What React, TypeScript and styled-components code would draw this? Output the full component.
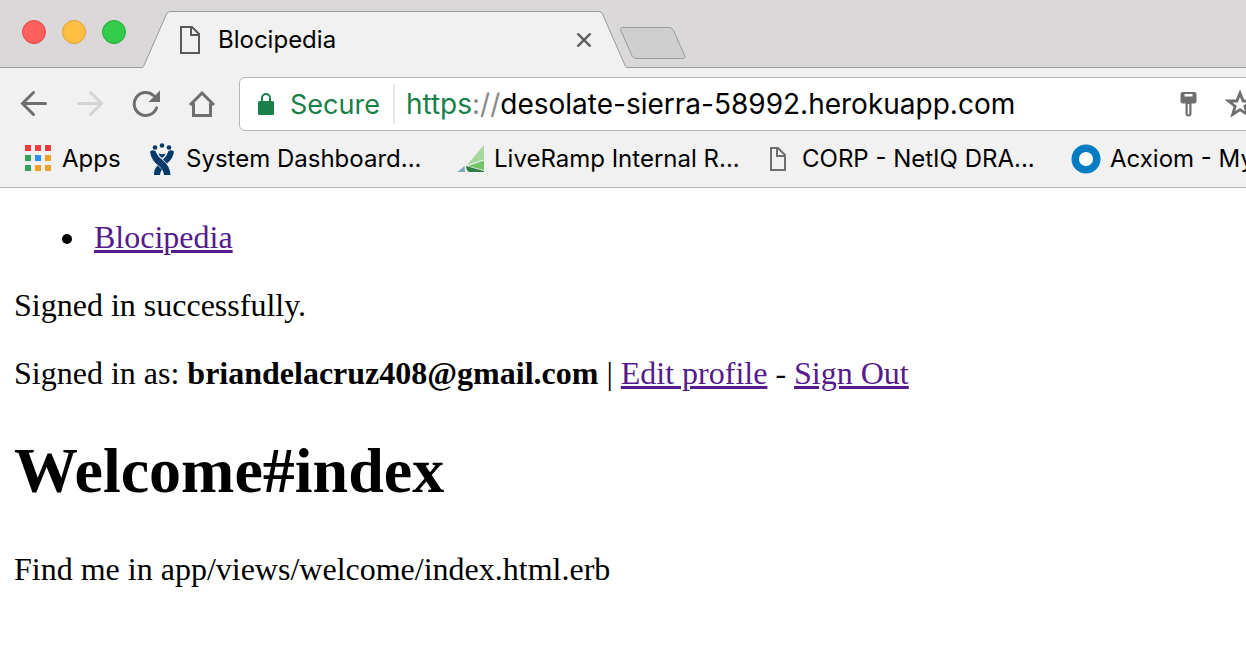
import React from "react";
import styled, { createGlobalStyle } from "styled-components";

const GlobalStyle = createGlobalStyle`
  * { box-sizing: border-box; }
  body { margin: 0; background: #fff; color: #000; }
`;

const ui = `"Inter", "Roboto", sans-serif`;

const Browser = styled.div`
  display: flex;
  flex-direction: column;
  min-height: 100vh;
  overflow: hidden;
`;

const Chrome = styled.header`
  background: #f1f1f1;
  border-bottom: 1px solid #b4b4b4;
  font-family: ${ui};
`;

const TabStrip = styled.div`
  display: flex;
  align-items: flex-end;
  height: 68px;
  padding-left: 22px;
  background: #dad8d9;
  border-bottom: 1px solid #999;
`;

const WindowButtons = styled.div`
  display: flex;
  gap: 16px;
  width: 120px;
  margin-bottom: 23px;
`;

const WindowButton = styled.button<{ $fill: string; $edge: string }>`
  width: 24px;
  height: 24px;
  padding: 0;
  border: 1px solid ${(p) => p.$edge};
  border-radius: 50%;
  background: ${(p) => p.$fill};
`;

const Tab = styled.div`
  display: flex;
  height: 57px;
  margin-bottom: -1px;
`;

const TabEdge = styled.svg`
  display: block;
  flex: none;
`;

const TabBody = styled.div`
  display: flex;
  align-items: center;
  width: 429px;
  padding: 0 7px 0 10px;
  background: #f1f1f1;
  border-top: 1px solid #999;
`;

const TabTitle = styled.span`
  flex: 1;
  padding-left: 18px;
  font-size: 24px;
  line-height: 28px;
`;

const IconButton = styled.button`
  display: flex;
  flex: none;
  padding: 0;
  border: 0;
  background: none;
`;

const NewTabButton = styled(IconButton)`
  margin: 0 0 8px -7px;
`;

const Toolbar = styled.div`
  display: flex;
  align-items: center;
  height: 63px;
  padding: 9px 0 0 20px;
`;

const NavButtons = styled.nav`
  display: flex;
  flex: none;
  gap: 28px;
  margin-right: 23px;
`;

const Omnibox = styled.div`
  display: flex;
  flex: 1;
  align-items: center;
  min-width: 0;
  height: 54px;
  margin-right: -26px;
  padding: 0 16px;
  background: #fff;
  border: 1px solid #b4b4b4;
  border-radius: 6px;
  font-size: 28px;
`;

const Secure = styled.span`
  padding: 0 13px 0 14px;
  color: #188048;
  font-size: 27px;
`;

const Divider = styled.span`
  width: 2px;
  height: 40px;
  margin-right: 11px;
  background: #e8e8e8;
`;

const Scheme = styled.label`
  color: #888;
`;

const SchemeName = styled.span`
  color: #188048;
`;

const Address = styled.input`
  flex: 1;
  min-width: 0;
  padding: 0;
  border: 0;
  outline: 0;
  background: none;
  color: #000;
  font: inherit;
`;

const OmniboxActions = styled.div`
  display: flex;
  flex: none;
  align-items: center;
  gap: 28px;
`;

const Bookmarks = styled.nav`
  display: flex;
  align-items: center;
  height: 56px;
  padding-left: 24px;
  white-space: nowrap;
`;

const Bookmark = styled.a<{ $width: number; $gap: number }>`
  display: flex;
  flex: none;
  align-items: center;
  gap: ${(p) => p.$gap}px;
  width: ${(p) => p.$width}px;
  color: #000;
  font-size: 24px;
  line-height: 28px;
  text-decoration: none;
`;

const Page = styled.main`
  padding: 31px 14px;
  font-family: "Liberation Serif", "Times New Roman", serif;
  font-size: 32px;
  line-height: 36px;
`;

const List = styled.ul`
  margin: 0;
  padding-left: 48px;
  list-style: none;
`;

const ListItem = styled.li`
  display: flex;
  align-items: center;
  gap: 22px;

  &::before {
    content: "";
    width: 10px;
    height: 10px;
    margin-top: 4px;
    border-radius: 50%;
    background: #000;
  }
`;

const Paragraph = styled.p`
  margin: 32px 0;
`;

const PageLink = styled.a`
  color: #551a8b;
  text-decoration: underline;
`;

const Heading = styled.h1`
  margin: 43px 0;
  font-size: 64px;
  line-height: 74px;
`;

function PageIcon({ width, height, color }: { width: number; height: number; color: string }) {
  return (
    <svg width={width} height={height} viewBox={`0 0 ${width} ${height}`} fill="none" stroke={color} strokeWidth="2">
      <path d={`M1 1H${width - 8}L${width - 1} 8V${height - 1}H1Z M${width - 9} 1V9H${width - 1}`} />
    </svg>
  );
}

function ArrowIcon({ color, right }: { color: string; right?: boolean }) {
  return (
    <svg width="28" height="28" viewBox="0 0 28 28" fill="none" stroke={color} strokeWidth="3" strokeLinecap="round">
      <path d={right ? "M2.500 13.500H25M14.500 2.500L25.500 13.500L14.500 24.500" : "M25.500 13.500H3M13.500 2.500L2.500 13.500L13.500 24.500"} />
    </svg>
  );
}

function ReloadIcon() {
  return (
    <svg width="28" height="28" viewBox="0 0 28 28">
      <path d="M24.500 18A11.500 11.500 0 1 1 21.500 5.500" fill="none" stroke="#6e6e6e" strokeWidth="3" strokeLinecap="round" />
      <path d="M28 0.500V12H16.500Z" fill="#6e6e6e" />
    </svg>
  );
}

function HomeIcon() {
  return (
    <svg width="28" height="28" viewBox="0 0 28 28" fill="none" stroke="#6e6e6e" strokeWidth="3">
      <path d="M2 15L14 3L26 15M5.500 13V25.500H22.500V13" />
    </svg>
  );
}

function LockIcon() {
  return (
    <svg width="20" height="22" viewBox="0 0 20 22">
      <rect x="2" y="8" width="16" height="14" rx="1.500" fill="#188048" />
      <path d="M6 9V5a4 4 0 0 1 8 0V9" fill="none" stroke="#188048" strokeWidth="2" />
    </svg>
  );
}

function KeyIcon() {
  return (
    <svg width="17" height="25" viewBox="0 0 17 25" fill="#6e6e6e">
      <path fillRule="evenodd" d="M2.500 0H14.500Q16.500 0 16.500 2V9Q16.500 11.500 14 11.500H11.500V21.500Q11.500 24.500 8.500 24.500Q5.500 24.500 5.500 21.500V11.500H3Q0.500 11.500 0.500 9V2Q0.500 0 2.500 0ZM4.500 2V4.500H12.500V2ZM7.700 12V22.500H9.300V12Z" />
    </svg>
  );
}

function StarIcon() {
  return (
    <svg width="30" height="28" viewBox="0 0 30 28" fill="none" stroke="#6e6e6e" strokeWidth="2.800">
      <path d="M15 3L18.100 11H26.500L19.900 16.200L22.300 24.500L15 19.700L7.700 24.500L10.100 16.200L3.500 11H11.900Z" />
    </svg>
  );
}

function AppsIcon() {
  const colors = ["#f33b3b", "#f33b3b", "#f33b3b", "#35a05c", "#2b90f5", "#f0a029", "#35a05c", "#f0a029", "#f0a029"];
  return (
    <svg width="28" height="28" viewBox="0 0 28 28">
      {colors.map((fill, i) => (
        <rect key={i} x={1 + (i % 3) * 10} y={Math.floor(i / 3) * 10} width="6" height="6" fill={fill} />
      ))}
    </svg>
  );
}

function JiraIcon() {
  return (
    <svg width="26" height="34" viewBox="0 0 26 34" fill="#003a6b">
      <circle cx="6" cy="5.500" r="2.300" />
      <circle cx="13" cy="3.500" r="2.300" />
      <circle cx="20" cy="5.500" r="2.300" />
      <path d="M9.500 11.500Q13 13 16.500 11.500Q15.500 15 13 16Q10.500 15 9.500 11.500Z" />
      <path d="M1 9.500Q4 7.500 6.500 9Q8 14 13.500 18Q21 24 21.500 33H15Q14.500 28 10.500 24.500Q2 18.500 1 9.500Z" />
      <path d="M25 9.500Q22 7.500 19.500 9Q18 14 14 17.500L18 21.500Q24 17 25 9.500ZM8.500 23.500Q5 27 5 33H11Q11.300 29.500 13 27.500Z" />
    </svg>
  );
}

function RampIcon() {
  return (
    <svg width="28" height="28" viewBox="0 0 28 28">
      <path d="M27 0V14.500L10 20Z" fill="#a5d99c" />
      <path d="M27 15.500V25L11 21Z" fill="#72c567" />
      <path d="M9 21L18 23.500L27 26V27H12Q9 25 9 21Z" fill="#2e8042" />
      <path d="M0.500 27L7.500 21L8 27Z" fill="#82a4b8" />
    </svg>
  );
}

function RingIcon() {
  return (
    <svg width="30" height="30" viewBox="0 0 30 30">
      <circle cx="15" cy="15" r="10.800" fill="#fff" stroke="#007dc3" strokeWidth="7.400" />
    </svg>
  );
}

export default function App() {
  return (
    <Browser>
      <GlobalStyle />
      <Chrome>
        <TabStrip>
          <WindowButtons>
            <WindowButton aria-label="Close window" $fill="#ff605c" $edge="#df4945" />
            <WindowButton aria-label="Minimize window" $fill="#ffbf43" $edge="#dfa033" />
            <WindowButton aria-label="Zoom window" $fill="#34cb4a" $edge="#26ab36" />
          </WindowButtons>
          <Tab>
            <TabEdge width="28" height="57" viewBox="0 0 28 57">
              <path d="M0 57L1.500 55.500L24.500 3Q25.500 0.500 28 0.500V57Z" fill="#f1f1f1" />
              <path d="M0 56.500Q1 56.500 1.500 55.500L24.500 3Q25.500 0.500 28 0.500" fill="none" stroke="#999" />
            </TabEdge>
            <TabBody>
              <PageIcon width={20} height={28} color="#5a5a5a" />
              <TabTitle>Blocipedia</TabTitle>
              <IconButton aria-label="Close tab">
                <svg width="16" height="16" viewBox="0 0 16 16" stroke="#5a5a5a" strokeWidth="2.400">
                  <path d="M1.500 1.500L14.500 14.500M14.500 1.500L1.500 14.500" />
                </svg>
              </IconButton>
            </TabBody>
            <TabEdge width="28" height="57" viewBox="0 0 28 57">
              <path d="M28 57L26.500 55.500L3.500 3Q2.500 0.500 0 0.500V57Z" fill="#f1f1f1" />
              <path d="M28 56.500Q27 56.500 26.500 55.500L3.500 3Q2.500 0.500 0 0.500" fill="none" stroke="#999" />
            </TabEdge>
          </Tab>
          <NewTabButton aria-label="New tab">
            <svg width="66" height="32" viewBox="0 0 66 32">
              <path d="M3 0.500H49Q52 0.500 53.500 3.500L64.500 28Q66 31.500 62.500 31.500H17Q13.500 31.500 12 28.500L1 4Q-0.500 0.500 3 0.500Z" fill="#cfcfcf" stroke="#999" />
            </svg>
          </NewTabButton>
        </TabStrip>
        <Toolbar>
          <NavButtons>
            <IconButton aria-label="Back"><ArrowIcon color="#6e6e6e" /></IconButton>
            <IconButton aria-label="Forward"><ArrowIcon color="#d4d4d4" right /></IconButton>
            <IconButton aria-label="Reload"><ReloadIcon /></IconButton>
            <IconButton aria-label="Home"><HomeIcon /></IconButton>
          </NavButtons>
          <Omnibox>
            <LockIcon />
            <Secure>Secure</Secure>
            <Divider />
            <Scheme htmlFor="address"><SchemeName>https</SchemeName>://</Scheme>
            <Address id="address" type="text" defaultValue="desolate-sierra-58992.herokuapp.com" />
            <OmniboxActions>
              <IconButton aria-label="Saved passwords"><KeyIcon /></IconButton>
              <IconButton aria-label="Bookmark this page"><StarIcon /></IconButton>
            </OmniboxActions>
          </Omnibox>
        </Toolbar>
        <Bookmarks>
          <Bookmark href="#" $width={125} $gap={10}><AppsIcon />Apps</Bookmark>
          <Bookmark href="#" $width={308} $gap={11}><JiraIcon />System Dashboard...</Bookmark>
          <Bookmark href="#" $width={313} $gap={9}><RampIcon />LiveRamp Internal R...</Bookmark>
          <Bookmark href="#" $width={301} $gap={16}><PageIcon width={16} height={24} color="#6e6e6e" />CORP - NetIQ DRA...</Bookmark>
          <Bookmark href="#" $width={260} $gap={9}><RingIcon />Acxiom - My</Bookmark>
        </Bookmarks>
      </Chrome>
      <Page>
        <List>
          <ListItem><PageLink href="#">Blocipedia</PageLink></ListItem>
        </List>
        <Paragraph>Signed in successfully.</Paragraph>
        <Paragraph>
          Signed in as: <strong>briandelacruz408@gmail.com</strong> | <PageLink href="#">Edit profile</PageLink> - <PageLink href="#">Sign Out</PageLink>
        </Paragraph>
        <Heading>Welcome#index</Heading>
        <Paragraph>Find me in app/views/welcome/index.html.erb</Paragraph>
      </Page>
    </Browser>
  );
}
